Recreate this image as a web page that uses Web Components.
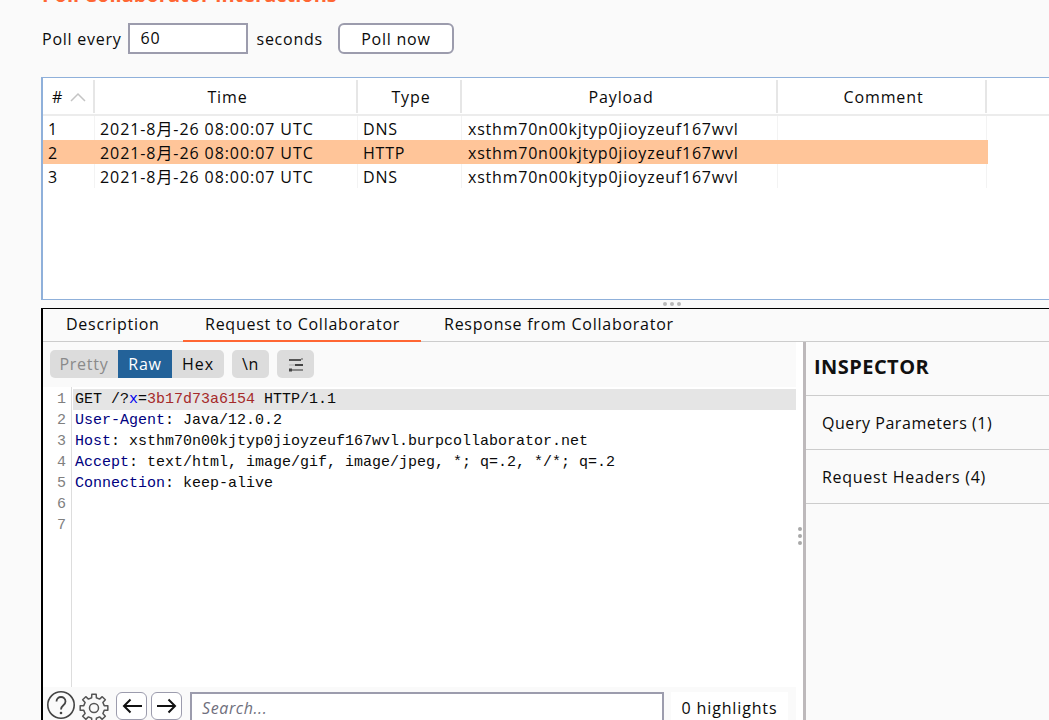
<!DOCTYPE html>
<html lang="en">
<head>
<meta charset="utf-8">
<title>Poll Collaborator interactions</title>
<style>
  html, body { margin: 0; padding: 0; height: 720px; overflow: hidden; background: #fafafa; }
  body { font-family: "Open Sans", "Noto Sans CJK SC", sans-serif; color: #0a0a0a; display: flex; flex-direction: column; }
</style>
</head>
<body>
<poll-bar></poll-bar>
<interaction-grid></interaction-grid>
<split-dots></split-dots>
<detail-panel>
  <tab-strip slot="tabs"></tab-strip>
  <request-editor slot="editor"></request-editor>
  <inspector-side slot="side"></inspector-side>
</detail-panel>

<script>
class PollBar extends HTMLElement {
  constructor() {
    super();
    this.attachShadow({ mode: 'open' }).innerHTML = `
      <style>
        :host { display: block; height: 77px; padding-left: 42px; font-size: 16px; letter-spacing: .75px; overflow: hidden; }
        h2 { margin: -17px 0 0; height: 24px; line-height: 24px; font-size: 20px; font-weight: 700; color: #ff6633; letter-spacing: 0; white-space: nowrap; }
        .row { display: flex; align-items: center; height: 31px; margin-top: 16px; }
        .input { box-sizing: border-box; width: 120px; height: 31px; margin: 0 9px 0 6px; padding: 0 11px; line-height: 27px; background: #fff; border: 2px solid #9c9cad; }
        button { box-sizing: border-box; width: 116px; height: 31px; margin-left: 15px; padding: 0; font: inherit; letter-spacing: inherit; color: inherit; background: #fff; border: 2px solid #9c9cad; border-radius: 6px; }
      </style>
      <h2>Poll Collaborator interactions</h2>
      <div class="row">
        <span>Poll every</span>
        <div class="input">60</div>
        <span>seconds</span>
        <button>Poll now</button>
      </div>`;
  }
}

class InteractionGrid extends HTMLElement {
  constructor() {
    super();
    const cols = 'display:grid;grid-template-columns:52px 263px 104px 316px 209px;';
    const payload = 'xsthm70n00kjtyp0jioyzeuf167wvl';
    const date = '2021-8月-26 08:00:07 UTC';
    const rows = [['1', date, 'DNS', payload], ['2', date, 'HTTP', payload], ['3', date, 'DNS', payload]];
    this.attachShadow({ mode: 'open' }).innerHTML = `
      <style>
        :host { display: block; box-sizing: border-box; height: 223px; margin-left: 41px; background: #fff; border: 1px solid #8fb0da; border-right: 0; border-left-width: 2px; font-size: 16px; letter-spacing: .78px; }
        .head { ${cols} box-sizing: border-box; height: 38px; padding-top: 2px; border-bottom: 2px solid #ececec; }
        .head div { display: flex; align-items: center; justify-content: center; gap: 7px; box-sizing: border-box; height: 33px; padding-left: 4px; border-right: 2px solid #e6e6e6; letter-spacing: .9px; }
        .head div:first-child { padding-left: 2px; }
        .r { ${cols} width: 945px; height: 24px; }
        .r div { box-sizing: border-box; height: 24px; padding: 2px 0 0 5px; line-height: 22px; border-right: 1px solid #f3f3f3; white-space: nowrap; overflow: hidden; }
        .r div:nth-child(2) { letter-spacing: .92px; }
        .r div:nth-child(4) { padding-left: 6px; }
        .r.sel { background: #ffc599; }
        .r.sel div { border-right-color: transparent; }
        svg { display: block; }
      </style>
      <div class="head">
        <div># <svg width="16" height="10" viewBox="0 0 16 10"><path d="M1 9 8 2l7 7" fill="none" stroke="#c4c4c4" stroke-width="1.5"/></svg></div>
        <div>Time</div><div>Type</div><div>Payload</div><div>Comment</div>
      </div>
      <div class="rows">
        ${rows.map((r, i) => `<div class="r ${i === 1 ? 'sel' : ''}">${r.map(c => `<div>${c}</div>`).join('')}<div></div></div>`).join('')}
      </div>`;
  }
}

class SplitDots extends HTMLElement {
  constructor() {
    super();
    this.attachShadow({ mode: 'open' }).innerHTML = `
      <style>
        :host { display: flex; justify-content: center; gap: 3px; height: 8px; padding: 2px 0 2px 295px; box-sizing: border-box; align-items: center; }
        i { width: 4px; height: 4px; border-radius: 50%; background: #b9b9b9; }
      </style>
      <i></i><i></i><i></i>`;
  }
}

class DetailPanel extends HTMLElement {
  constructor() {
    super();
    this.attachShadow({ mode: 'open' }).innerHTML = `
      <style>
        :host { display: grid; grid-template-columns: 763px 1fr; grid-template-rows: 33px 1fr; flex: 1; min-height: 0; margin-left: 41px; border-top: 1px solid #000; border-left: 2px solid #000; }
        .t { grid-column: 1 / 3; }
      </style>
      <div class="t"><slot name="tabs"></slot></div>
      <slot name="editor"></slot>
      <slot name="side"></slot>`;
  }
}

class TabStrip extends HTMLElement {
  constructor() {
    super();
    this.attachShadow({ mode: 'open' }).innerHTML = `
      <style>
        :host { display: flex; box-sizing: border-box; height: 33px; border-bottom: 1px solid #ccc; font-size: 16px; letter-spacing: .75px; }
        div { box-sizing: border-box; height: 33px; padding: 3px 23px 0; line-height: 24px; white-space: nowrap; }
        .on { padding-left: 22px; border-bottom: 2px solid #ff6633; }
      </style>
      <div style="width:140px">Description</div>
      <div class="on" style="width:238px">Request to Collaborator</div>
      <div>Response from Collaborator</div>`;
  }
}

// cog outline with eight square teeth, centred on 15,15
function gearPath(outer, root) {
  const pts = [];
  const at = (r, deg) => {
    const a = deg * Math.PI / 180;
    return (15 + r * Math.cos(a)).toFixed(2) + ' ' + (15 + r * Math.sin(a)).toFixed(2);
  };
  for (let i = 0; i < 8; i++) {
    const a = i * 45;
    pts.push(at(root, a - 13), at(outer, a - 9), at(outer, a + 9), at(root, a + 13));
  }
  return 'M' + pts.join('L') + 'Z';
}

class RequestEditor extends HTMLElement {
  constructor() {
    super();
    const nums = [1, 2, 3, 4, 5, 6, 7];
    this.attachShadow({ mode: 'open' }).innerHTML = `
      <style>
        :host { display: flex; flex-direction: column; box-sizing: border-box; min-height: 0; padding-right: 7px; background: #fff; font-size: 16px; letter-spacing: .75px; border-right: 3px solid #bdb9bb; }
        .tools { display: flex; gap: 8px; height: 45px; box-sizing: border-box; padding: 8px 0 0 7px; background: #fafafa; flex: none; }
        .seg { display: flex; height: 28px; }
        .seg span, .btn { display: flex; align-items: center; justify-content: center; height: 28px; background: #dcdcdc; }
        .seg span:first-child { border-radius: 5px 0 0 5px; color: #8a8a8a; }
        .seg span:last-child { border-radius: 0 5px 5px 0; }
        .seg .on { background: #236299; color: #fff; }
        .seg span:last-child { letter-spacing: 1px; }
        .btn { width: 37px; border-radius: 5px; }
        .code { flex: 1; display: flex; min-height: 0; box-sizing: border-box; padding-top: 2px; font: 15px/21px "Liberation Mono", "DejaVu Sans Mono", monospace; letter-spacing: 0; }
        .nums { width: 29px; flex: none; box-sizing: border-box; margin-top: -2px; padding: 2px 5px 0 0; text-align: right; color: #808080; border-right: 1px solid #ddd; }
        .lines { flex: 1; padding-left: 1px; }
        .lines div { height: 21px; padding-left: 2px; white-space: pre; }
        .lines .cur { background: #e5e5e5; }
        .k { color: #000080; } .p { color: #0000ee; } .v { color: #a52a2a; }
        .foot { display: flex; align-items: flex-end; flex: none; height: 33px; box-sizing: border-box; background: #fafafa; padding-left: 3px; }
        .foot svg { display: block; flex: none; }
        .arrow { box-sizing: border-box; width: 31px; height: 28px; margin-right: 4px; background: #fff; border: 1px solid #9c9cad; border-radius: 6px; display: flex; align-items: center; justify-content: center; }
        .search { box-sizing: border-box; width: 474px; height: 28px; margin: 0 7px 0 4px; padding: 2px 10px 0; border: 2px solid #9c9cad; border-bottom: 0; background: #fff; font-style: italic; color: #6f6f7d; line-height: 24px; letter-spacing: .6px; }
        .hl { width: 117px; height: 28px; line-height: 33px; text-align: center; background: #fff; white-space: nowrap; letter-spacing: .85px; }
        .grip { position: absolute; left: 798px; top: 527px; display: grid; gap: 3px; }
        .grip i { width: 4px; height: 4px; border-radius: 50%; background: #a9a9a9; }
      </style>
      <div class="tools">
        <div class="seg">
          <span style="width:68px">Pretty</span><span class="on" style="width:54px">Raw</span><span style="width:52px">Hex</span>
        </div>
        <div class="btn">\\n</div>
        <div class="btn">
          <svg width="16" height="15" viewBox="0 0 16 15"><path d="M1 3h12" stroke="#555" stroke-width="2"/><path d="M13 2h2" stroke="#999" stroke-width="2"/><path d="M1 8h6" stroke="#aaa" stroke-width="1"/><path d="M7 8h8" stroke="#444" stroke-width="2"/><path d="M1 13h3" stroke="#444" stroke-width="3"/><path d="M4 13h11" stroke="#333" stroke-width="1"/></svg>
        </div>
      </div>
      <div class="code">
        <div class="nums">${nums.map(n => `<div>${n}</div>`).join('')}</div>
        <div class="lines">
          <div class="cur">GET /?<span class="p">x</span>=<span class="v">3b17d73a6154</span> HTTP/1.1</div>
          <div><span class="k">User-Agent</span>: Java/12.0.2</div>
          <div><span class="k">Host</span>: xsthm70n00kjtyp0jioyzeuf167wvl.burpcollaborator.net</div>
          <div><span class="k">Accept</span>: text/html, image/gif, image/jpeg, *; q=.2, */*; q=.2</div>
          <div><span class="k">Connection</span>: keep-alive</div>
        </div>
      </div>
      <div class="foot">
        <svg width="30" height="30" viewBox="0 0 30 30"><circle cx="15" cy="15" r="13.200" fill="none" stroke="#444" stroke-width="1.6"/><path d="M10.500 11.500c0-6 9-6 9 0 0 4-4.500 3.500-4.500 8" fill="none" stroke="#444" stroke-width="1.8"/><circle cx="15" cy="23" r="1.300" fill="#444"/></svg>
        <svg width="30" height="30" viewBox="0 0 30 30" style="margin:0 7px -3px 3px"><path d="${gearPath(14, 10.5)}" fill="none" stroke="#555" stroke-width="1.500" stroke-linejoin="round"/><circle cx="15" cy="15" r="4.500" fill="none" stroke="#555" stroke-width="1.500"/></svg>
        <div class="arrow"><svg width="22" height="16" viewBox="0 0 22 16"><path d="M21 8H3M9.500 1.500 3 8l6.500 6.500" fill="none" stroke="#111" stroke-width="2"/></svg></div>
        <div class="arrow"><svg width="22" height="16" viewBox="0 0 22 16"><path d="M1 8h18M12.500 1.500 19 8l-6.500 6.500" fill="none" stroke="#111" stroke-width="2"/></svg></div>
        <div class="search">Search...</div>
        <div class="hl">0 highlights</div>
      </div>
      <div class="grip"><i></i><i></i><i></i></div>`;
  }
}

class InspectorSide extends HTMLElement {
  constructor() {
    super();
    this.attachShadow({ mode: 'open' }).innerHTML = `
      <style>
        :host { display: block; background: #fafafa; font-size: 16px; letter-spacing: .55px; }
        h3 { margin: 0; box-sizing: border-box; height: 54px; padding: 0 0 0 8px; line-height: 50px; font-size: 20px; font-weight: 700; letter-spacing: .45px; color: #111; border-bottom: 1px solid #ccc; }
        div { box-sizing: border-box; height: 54px; padding-left: 16px; line-height: 54px; border-bottom: 1px solid #ccc; }
        h3 + div + div { letter-spacing: .72px; }
      </style>
      <h3>INSPECTOR</h3>
      <div>Query Parameters (1)</div>
      <div>Request Headers (4)</div>`;
  }
}

customElements.define('poll-bar', PollBar);
customElements.define('interaction-grid', InteractionGrid);
customElements.define('split-dots', SplitDots);
customElements.define('detail-panel', DetailPanel);
customElements.define('tab-strip', TabStrip);
customElements.define('request-editor', RequestEditor);
customElements.define('inspector-side', InspectorSide);
</script>
</body>
</html>
